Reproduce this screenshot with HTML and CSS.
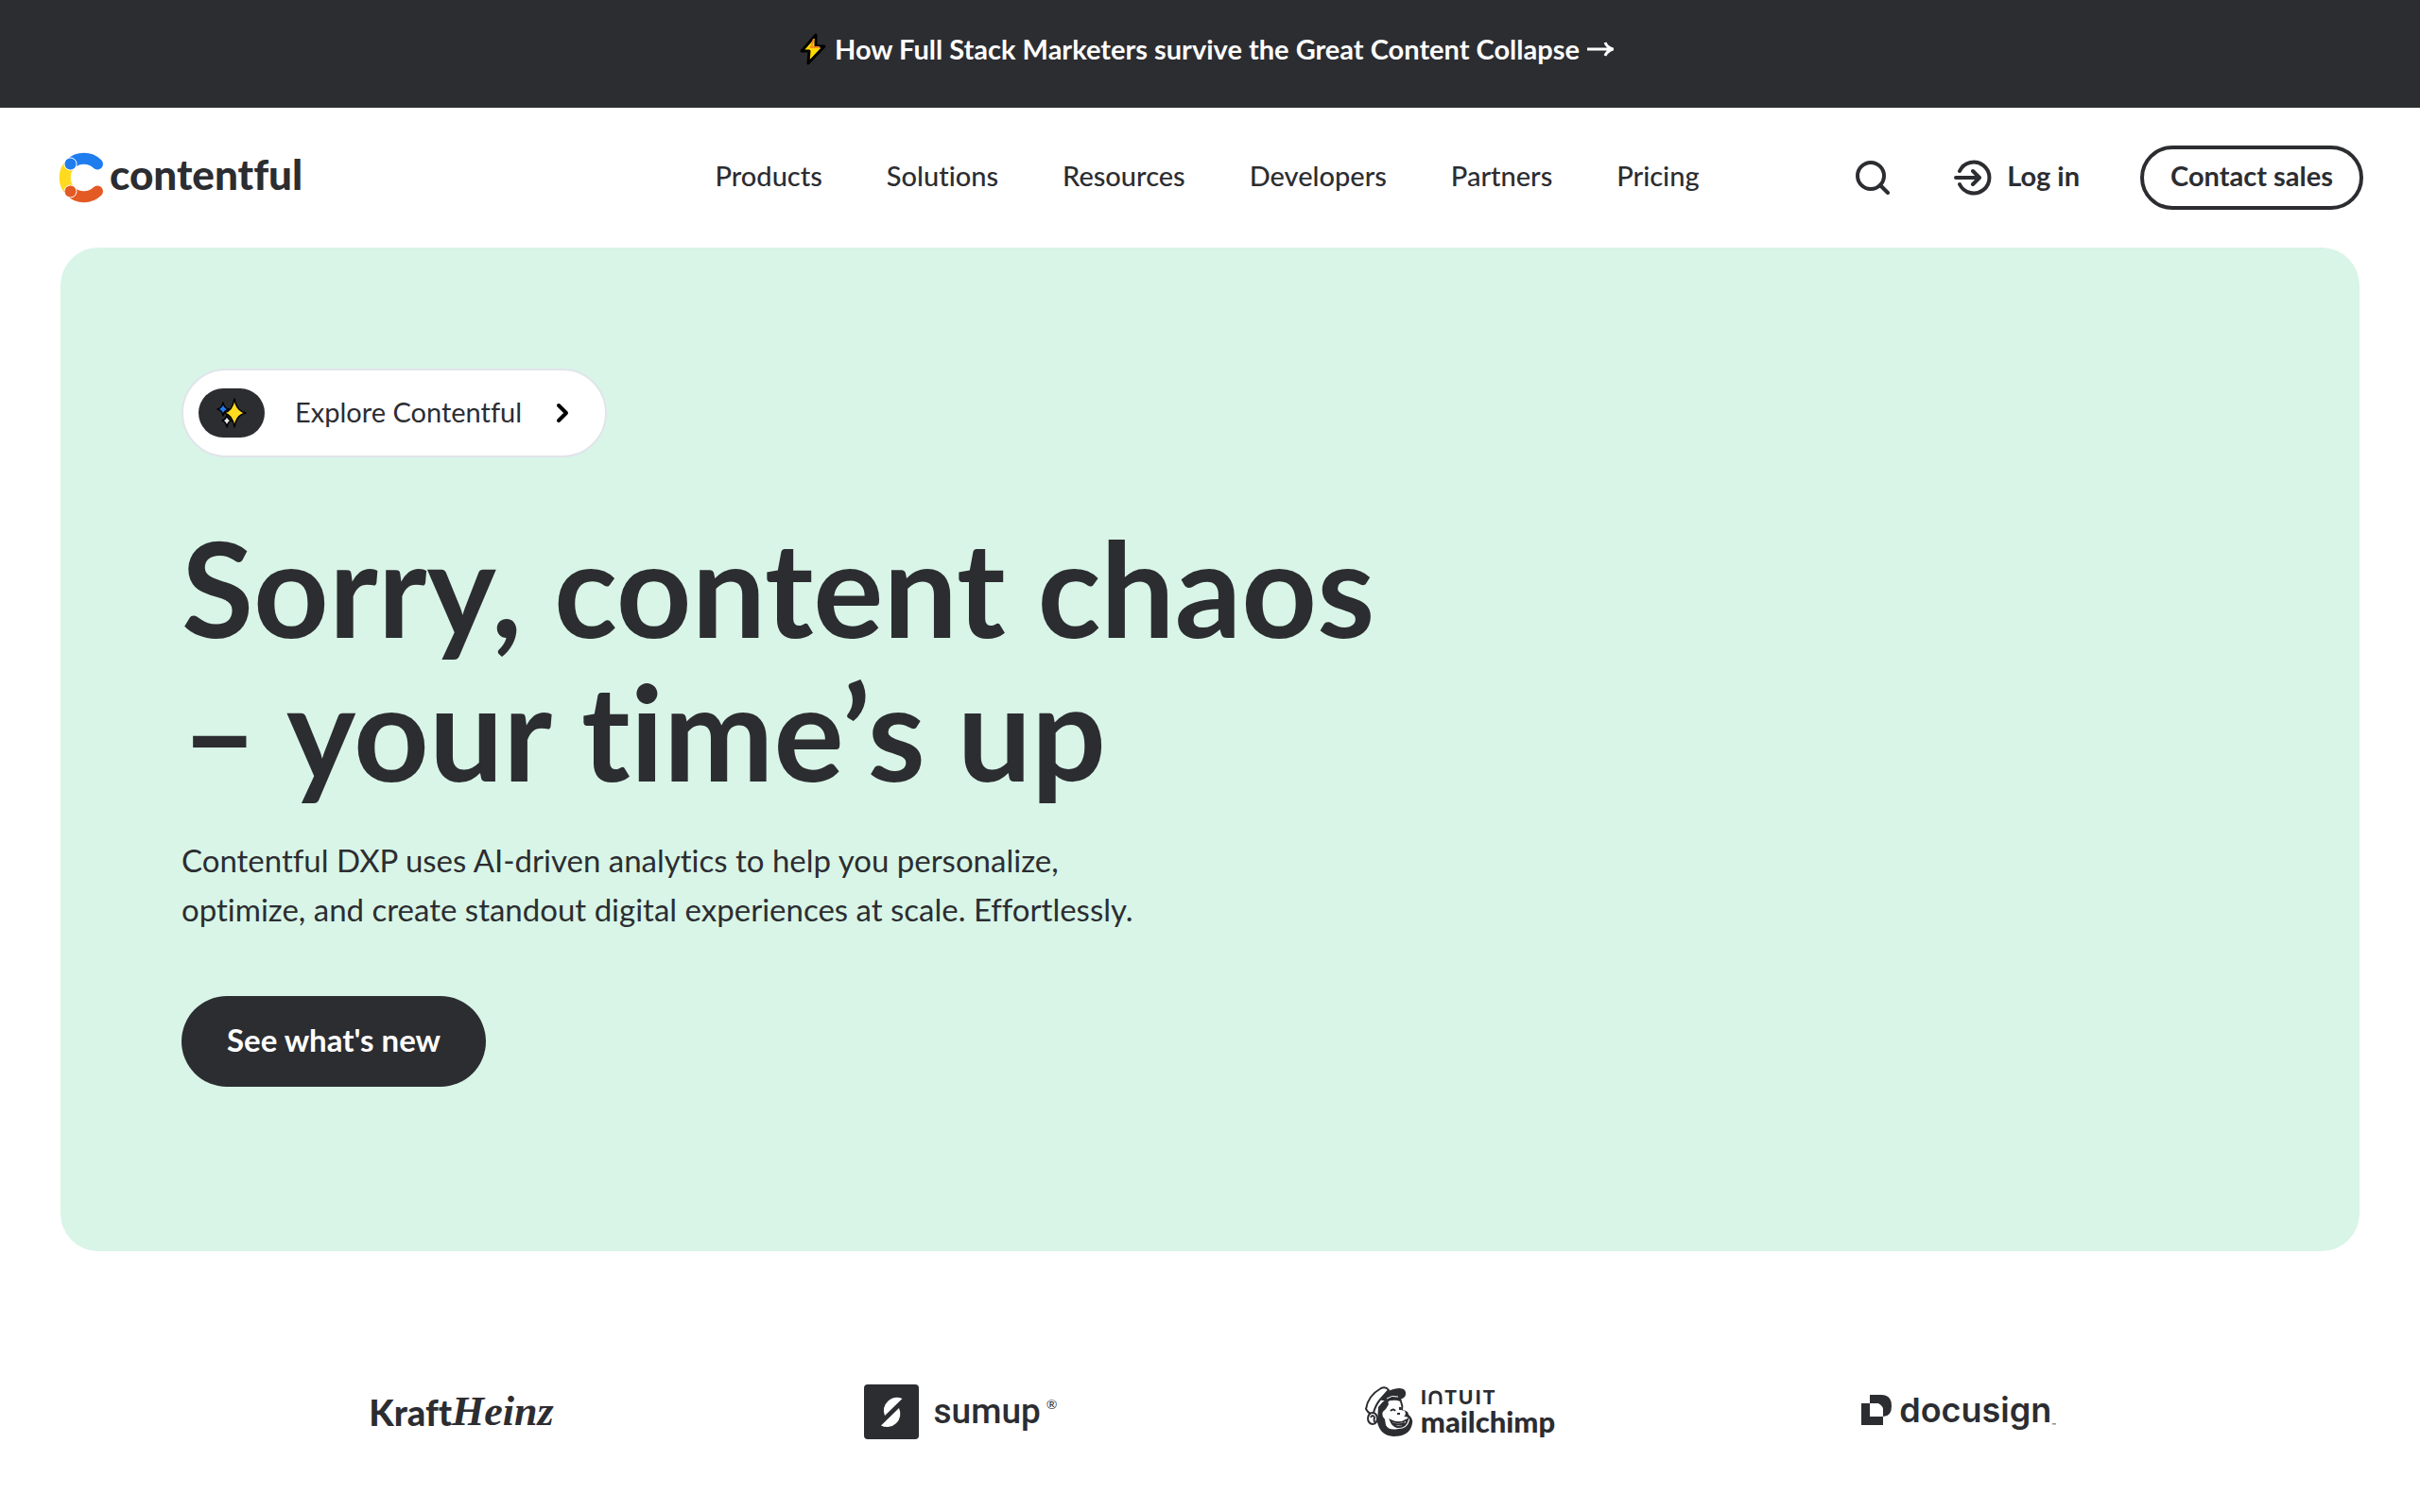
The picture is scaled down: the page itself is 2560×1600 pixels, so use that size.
FILE: index.html
```html
<!DOCTYPE html>
<html lang="en">
<head>
<meta charset="utf-8">
<meta name="viewport" content="width=device-width, initial-scale=1">
<title>Contentful</title>
<link rel="stylesheet" href="styles.css">
</head>
<body>
<a class="banner" href="#">
  <svg class="bolt" viewBox="0 0 30 34" aria-hidden="true"><path d="M18 2 3 19h8L10 32 27 14h-9z" fill="#ffda00" stroke="#000" stroke-width="3" stroke-linejoin="round"/><path d="M16 6 13 15h9" fill="none" stroke="#f28b1d" stroke-width="2"/></svg>
  <span>How Full Stack Marketers survive the Great Content Collapse</span>
  <svg class="arrow" viewBox="0 0 28 18" aria-hidden="true"><path d="M0 9h26M19 2q2 5 8 7-6 2-8 7" fill="none" stroke="#fff" stroke-width="3"/></svg>
</a>
<header class="header">
  <a class="brand" href="#">
    <svg class="brand-mark" viewBox="0 0 48 54" aria-hidden="true">
      <path d="M12.500 41.500A21 21 0 0 1 12.500 12.500" fill="none" stroke="#ffda1e" stroke-width="12"/>
      <path d="M12.500 12.500A20.500 20.500 0 0 1 41 12.500" fill="none" stroke="#1f7df0" stroke-width="12" stroke-linecap="round"/>
      <path d="M12.500 41.500A20.500 20.500 0 0 0 41 41.500" fill="none" stroke="#e35a24" stroke-width="12" stroke-linecap="round"/>
      <circle cx="12.500" cy="12.500" r="6.500" fill="#1f7df0" stroke="#fff"/>
      <circle cx="12.500" cy="41.500" r="6.500" fill="#e35a24" stroke="#fff"/>
    </svg>
    <span class="brand-name">contentful</span>
  </a>
  <nav class="nav" aria-label="Main">
    <a href="#">Products</a>
    <a href="#">Solutions</a>
    <a href="#">Resources</a>
    <a href="#">Developers</a>
    <a href="#">Partners</a>
    <a href="#">Pricing</a>
  </nav>
  <div class="actions">
    <button class="search" type="button" aria-label="Search">
      <svg viewBox="0 0 36 36" aria-hidden="true"><circle cx="16" cy="16" r="14" /><path d="m26 26 8 8"/></svg>
    </button>
    <a class="login" href="#">
      <svg viewBox="0 0 40 38" aria-hidden="true"><path d="M6 12a16.500 16.500 0 1 1 0 14M2 19h24M20 12l7 7-7 7"/></svg>
      <span>Log in</span>
    </a>
    <a class="contact" href="#">Contact sales</a>
  </div>
</header>
<main>
  <section class="hero">
    <a class="explore" href="#">
      <span class="badge">
        <svg viewBox="0 0 32 32" aria-hidden="true"><g stroke="#000" stroke-width="1.500" stroke-linejoin="round"><path d="M7 5q1 6 6 7-5 1-6 7-1-6-6-7 5-1 6-7z" fill="#1f7df0"/><path d="M11 18q1 5 5 6-4 1-5 7-1-6-5-7 4-1 5-6z" fill="#e5ebed"/><path d="M19 1q2 13 12 15-10 2-12 15-2-13-11-15 9-2 11-15z" fill="#ffda1e"/></g></svg>
      </span>
      <span class="explore-text">Explore Contentful</span>
      <svg class="chevron" viewBox="0 0 14 22" aria-hidden="true"><path d="m3 3 8 8-8 8" fill="none" stroke="#000" stroke-width="4" stroke-linecap="round" stroke-linejoin="round"/></svg>
    </a>
    <h1>Sorry, content chaos <br>– your time’s up</h1>
    <p>Contentful DXP uses AI-driven analytics to help you personalize, <br>optimize, and create standout digital experiences at scale. Effortlessly.</p>
    <a class="cta" href="#">See what's new</a>
  </section>
  <ul class="logos">
    <li class="kraftheinz"><span class="kraft">Kraft</span><span class="heinz">Heinz</span></li>
    <li class="sumup">
      <svg viewBox="0 0 58 58" aria-hidden="true"><rect width="58" height="58" rx="4" fill="#2c2d31"/><path d="M40.500 15A14 14 0 0 0 22 33z" fill="#fff"/><path d="M37 25A14 14 0 0 1 18 43.500z" fill="#fff"/></svg>
      <span class="sumup-name">sumup</span><sup>®</sup>
    </li>
    <li class="mailchimp">
      <svg viewBox="0 0 52 54" aria-hidden="true">
        <path d="M15 22Q22 11 38 10l2 6q2 5 1 9 6 1 6 5 5 4 4 9-2 14-20 14-14-1-17-15z" fill="#2c2d31"/>
        <path d="M26 19q-2-4 3-4 5-1 9 1 2 5 1 9l4 1q2 4-1 6 6 0 6 4-2 9-12 9-10 2-13-4l-1-6q-6-6 1-11z" fill="#fff"/>
        <path d="M2 24Q4 10 18 2q5-2 8 2L17 14q-5 6-7 14-4 3-8-4z" fill="#fff" stroke="#2c2d31" stroke-width="2"/>
        <path d="M18 15Q22 3 37 2q8 0 7 7-1 4-7 5-6-3-14 1z" fill="#2c2d31"/>
        <path d="M24 13q5-4 12-2" fill="none" stroke="#fff"/>
        <ellipse cx="9" cy="34" rx="5" ry="6" fill="#fff" stroke="#2c2d31" stroke-width="2"/>
        <path d="M7 33q2-4 4 0-1 2 0 5M28 26q3-3 5 0M38 22v3M35 29h3M28 36q9 5 18-1-2 9-11 8-5-1-7-7zM29 39q7 3 14 0" fill="none" stroke="#2c2d31" stroke-width="2"/>
      </svg>
      <span class="mailchimp-name"><span class="intuit"><span>I</span><svg viewBox="0 0 15 15" aria-hidden="true"><path d="M2 15V8q0-6 5.500-6T13 8v7" fill="none" stroke="#2c2d31" stroke-width="3"/></svg><span>T</span><span>U</span><span>I</span><span>T</span></span><span class="chimp">mailchimp</span></span>
    </li>
    <li class="docusign">
      <svg viewBox="0 0 32 32" aria-hidden="true"><path d="M0 9h9v14h14v9H0z" fill="#2c2d31"/><path d="M9 0h12q11 0 11 12 0 11-9 11V15q0-3-5-6H9z" fill="#2c2d31"/></svg>
      <span class="docusign-name">docusign</span><small>™</small>
    </li>
  </ul>
</main>
</body>
</html>
```

FILE: styles.css
```css
* {
  box-sizing: border-box;
}

body {
  margin: 0;
  background: #fff;
  color: #2c2d31;
  font-family: Lato, "Open Sans", sans-serif;
  font-size: 29px;
  font-variant-ligatures: none;
  line-height: 36px;
}

a {
  color: inherit;
  text-decoration: none;
}

.banner {
  display: flex;
  justify-content: center;
  align-items: center;
  gap: 8px;
  min-height: 114px;
  padding: 0 8px 10px 0;
  background: #2c2d31;
  color: #fff;
  font-weight: 700;
}

.bolt {
  width: 30px;
  height: 34px;
}

.arrow {
  width: 28px;
  height: 18px;
}

.header {
  display: grid;
  grid-template-columns: 1fr auto 1fr;
  align-items: center;
  min-height: 148px;
  padding: 0 60px 0 62px;
}

.brand {
  display: flex;
  align-items: center;
  gap: 6px;
}

.brand-mark {
  width: 48px;
  height: 54px;
}

.brand-name {
  padding-bottom: 8px;
  font-size: 44px;
  font-weight: 900;
  line-height: 48px;
}

.nav {
  display: flex;
  gap: 68px;
  padding: 0 8px 4px 0;
  font-weight: 500;
}

.actions {
  display: flex;
  justify-content: flex-end;
  align-items: center;
  font-weight: 700;
}

.actions svg {
  display: block;
  fill: none;
  stroke: #2c2d31;
  stroke-width: 4;
  stroke-linecap: round;
  stroke-linejoin: round;
}

.search {
  margin-right: 68px;
  padding: 0;
  border: 0;
  background: none;
}

.search svg {
  width: 36px;
  height: 36px;
}

.login {
  display: flex;
  align-items: center;
  gap: 16px;
  margin-right: 64px;
}

.login span {
  padding-bottom: 4px;
}

.login svg {
  width: 40px;
  height: 38px;
}

.contact {
  padding: 10px 28px 14px;
  border: 4px solid #2c2d31;
  border-radius: 34px;
}

.hero {
  display: flex;
  flex-direction: column;
  align-items: flex-start;
  margin: 0 64px;
  padding: 128px 128px 174px;
  border-radius: 40px;
  background: #d8f5e7;
}

.explore {
  display: flex;
  align-items: center;
  min-height: 94px;
  padding: 0 38px 0 16px;
  border: 2px solid #e1e4ea;
  border-radius: 47px;
  background: #fff;
}

.badge {
  display: flex;
  justify-content: center;
  align-items: center;
  width: 70px;
  height: 52px;
  margin-right: 32px;
  border-radius: 26px;
  background: #2c2d31;
}

.badge svg {
  width: 32px;
  height: 32px;
}

.explore-text {
  padding-bottom: 2px;
}

.chevron {
  width: 14px;
  height: 22px;
  margin-left: 36px;
}

h1 {
  margin: 62px 0 0;
  font-size: 139px;
  font-weight: 700;
  line-height: 152px;
}

.hero p {
  margin: 34px 0 0;
  font-size: 33px;
  line-height: 52px;
}

.cta {
  margin-top: 66px;
  padding: 22px 48px 26px;
  border-radius: 48px;
  background: #2c2d31;
  color: #fff;
  font-size: 33px;
  font-weight: 700;
  line-height: 48px;
}

.logos {
  display: grid;
  grid-template-columns: repeat(4, 1fr);
  margin: 0;
  padding: 140px 224px 76px;
  list-style: none;
}

.logos li {
  display: flex;
  justify-content: center;
  align-items: center;
  height: 60px;
  line-height: 48px;
}

.kraft {
  font-size: 38px;
  font-weight: 900;
}

.heinz {
  font-family: "Liberation Serif", serif;
  font-size: 44px;
  font-style: italic;
  font-weight: 700;
}

.sumup svg {
  width: 58px;
  height: 58px;
  margin-right: 16px;
}

.sumup-name {
  font-family: Roboto, sans-serif;
  font-size: 37px;
  font-weight: 500;
}

.sumup sup {
  align-self: flex-start;
  margin-left: 6px;
  padding-top: 16px;
  font-size: 14px;
  line-height: 12px;
}

.mailchimp > svg {
  width: 52px;
  height: 54px;
  margin-right: 8px;
}

.mailchimp-name {
  display: flex;
  flex-direction: column;
}

.intuit {
  display: flex;
  align-items: center;
  gap: 2px;
  font-size: 21px;
  font-weight: 900;
  line-height: 20px;
}

.intuit svg {
  width: 15px;
  height: 15px;
}

.chimp {
  font-size: 31px;
  font-weight: 900;
  line-height: 32px;
}

.logos .docusign {
  padding-bottom: 4px;
}

.docusign svg {
  width: 32px;
  height: 32px;
  margin-right: 8px;
}

.docusign-name {
  font-family: Inter, sans-serif;
  font-size: 36px;
  font-weight: 600;
}

.docusign small {
  align-self: flex-end;
  font-size: 6px;
  line-height: 24px;
}
```
